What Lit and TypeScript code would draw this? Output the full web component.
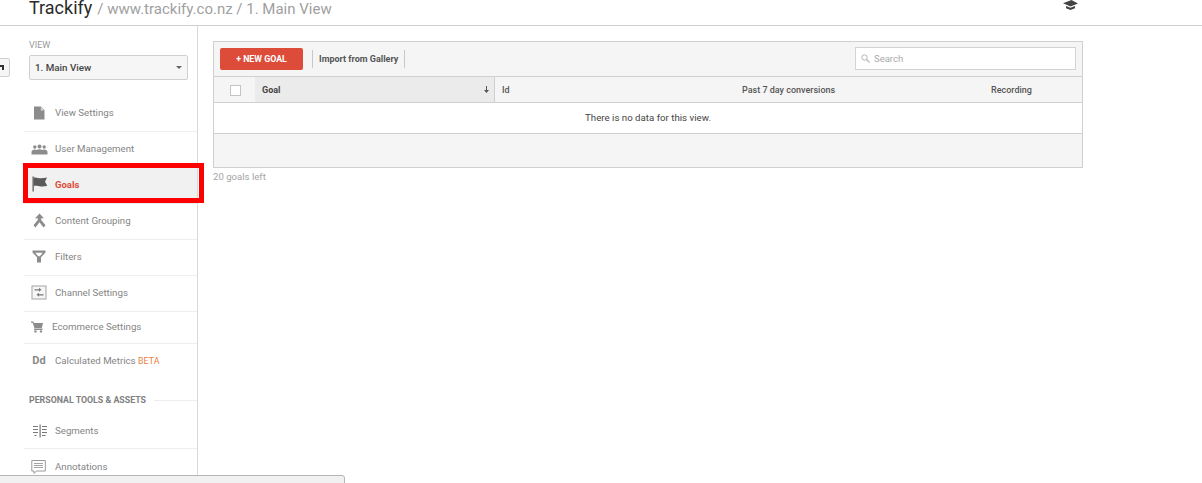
import { LitElement, html, css, svg } from "lit";
import { customElement } from "lit/decorators.js";

const icons: Record<string, unknown> = {
  doc: svg`<path d="M3 2.500h7l3.500 3.700V15.500H3z" fill="#8c8c8c"/><path d="M9.800 2.800v3.600h3.400z" fill="#d8d8d8"/>`,
  users: svg`<circle cx="3.800" cy="7" r="1.700" fill="#8c8c8c"/><circle cx="8.500" cy="6.400" r="2" fill="#8c8c8c"/><circle cx="13.200" cy="7" r="1.700" fill="#8c8c8c"/><path d="M.5 14.500v-2.500c0-1.400 1.500-2.500 3.300-2.500 .8 0 1.500 .2 1.900 .5 1.300-.9 4.300-.9 5.600 0 .4-.3 1.100-.5 1.900-.5 1.800 0 3.300 1.100 3.300 2.500v2.500z" fill="#8c8c8c"/>`,
  flag: svg`<path d="M1.500 .5h1.300v15H1.500z" fill="#5a5a5a"/><path d="M2.800 1.500c3-.5 4.500 .8 7 .8 2 0 4-.3 6.200-.8L14 5.800l2.300 4c-2.500 .7-4.500 1-6.500 .7-2.500-.3-4-.9-7-.5z" fill="#5a5a5a"/>`,
  merge: svg`<path d="M8.500 1.500l4.500 4.700h-2.800v1.800l4.300 5.200-2 2.300-4-5.200-4 5.200-2-2.300L6.800 8V6.200H4z" fill="#8c8c8c"/>`,
  filter: svg`<path d="M1.500 2.500h13V4.500L10 9.300v5.200H6V9.300L1.500 4.500z" fill="#8c8c8c"/><path d="M4.200 4.800h7.600L8.800 8.300h-1.600z" fill="#fff"/>`,
  channel: svg`<rect x="1" y="2" width="14" height="13" fill="#f6f6f6" stroke="#a3a3a3"/><path d="M3.500 5.200h4.500V3.800l2.500 2-2.500 2V6.400H3.500zM12.500 10.200H8v-1.400l-2.500 2 2.500 2v-1.400h4.500z" fill="#777"/>`,
  cart: svg`<path d="M2 3.500h2.400l.6 1.500h9l-1.200 5H5.500L3.600 4.800H2z" fill="#8c8c8c"/><path d="M5 10.500h8.500V12H5z" fill="#8c8c8c"/><circle cx="6.500" cy="13.400" r="1.200" fill="#8c8c8c"/><circle cx="12" cy="13.400" r="1.200" fill="#8c8c8c"/>`,
  seg: svg`<path d="M8.500 3.500h1.200v13H8.500zM2 5h5v1H2zM2 8h5v1H2zM2 11h5v1H2zM3.500 14h2v1h-2zM11 5h5v1h-5zM11 8h4.500v1H11zM11 11h5v1h-5zM11 14h3.500v1H11z" fill="#777"/>`,
  note: svg`<path d="M.8 3.500h13.500v10.500H5.500L3 16.500v-2.500H.8z" fill="#fff" stroke="#9a9a9a"/><path d="M3 6h9v1H3zM3 8h9v1H3zM3 10h9v1H3z" fill="#a5a5a5"/>`,
};

const navTop = [
  { icon: "doc", label: "View Settings" },
  { icon: "users", label: "User Management" },
  { icon: "flag", label: "Goals", active: true },
  { icon: "merge", label: "Content Grouping" },
  { icon: "filter", label: "Filters" },
  { icon: "channel", label: "Channel Settings" },
];

@customElement("app-root")
export class AppRoot extends LitElement {
  static styles = css`
    :host { display: block; position: relative; width: 1202px; height: 483px; overflow: hidden; background: #fff;
      font-family: Roboto, "Liberation Sans", sans-serif; font-size: 9px; color: #777; }
    .top { height: 25px; border-bottom: 1px solid #d0d0d0; display: flex; align-items: flex-start; padding-left: 29px; }
    .brand { font-size: 18px; line-height: 14px; color: #2a2a2a; margin: 1px 5px 0 0; }
    .crumb { font-size: 15px; line-height: 14px; color: #a0a0a0; margin-top: 2px; }
    .cap { margin-left: auto; margin-right: 124px; }
    .main { display: flex; height: 457px; }
    .side { width: 173px; margin-left: 24px; border-right: 1px solid #d9d9d9; flex: none; padding-top: 15px; }
    .viewlabel { font-size: 9px; line-height: 9px; color: #999; padding-left: 5px; }
    .selrow { height: 25px; margin: 5px 0 0 5px; width: 159px; box-sizing: border-box; border: 1px solid #d0d0d0; border-radius: 2px;
      background: #f6f6f6; display: flex; align-items: center; padding: 0 5px; font-weight: 500; font-size: 9.8px; color: #444; }
    .caret { margin-left: auto; width: 0; height: 0; border: 3px solid transparent; border-top-color: #666; border-bottom: 0; }
    .nav { margin-top: 16px; }
    .row { height: 36px; box-sizing: border-box; padding-bottom: 2px; border-bottom: 1px solid #eee; display: flex; align-items: center; }
    .row.short { height: 32px; }
    .row.last { border-bottom: 0; }
    .row.calc { padding-bottom: 0; }
    .row.seg { padding-bottom: 1px; }
    .row.active { background: #f1f1f1; }
    .ico { width: 31px; flex: none; display: flex; justify-content: center; }
    .row.cart-row .ico { width: 28px; }
    .lbl { font-size: 9.7px; color: #858585; }
    .active .lbl { color: #dd4b39; font-weight: 700; font-size: 9.5px; }
    .beta { color: #e8823f; font-size: 8.9px; }
    .dd { font-weight: 700; font-size: 11px; color: #8a8a8a; margin-right: 1px; }
    .sect { display: flex; align-items: center; gap: 8px; margin: 18px 0 7px 5px; font-size: 8.8px; font-weight: 700; color: #808080; height: 12px; white-space: nowrap; }
    .sect i { flex: 1; border-top: 1px solid #eee; }
    .content { padding: 15px 0 0 15px; }
    .panel { width: 870px; box-sizing: border-box; border: 1px solid #d0d0d0; background: #f5f5f5; }
    .bar { height: 34px; display: flex; align-items: center; padding: 0 6px; border-bottom: 1px solid #d0d0d0; }
    .btn { width: 83px; height: 22px; border-radius: 2px; background: #dd4b39; color: #fff; font-weight: 700; font-size: 8.8px; display: flex; align-items: center; justify-content: center; }
    .imp { margin-left: 9px; border-left: 1px solid #c8c8c8; border-right: 1px solid #c8c8c8; height: 18px; padding: 0 6px; display: flex; align-items: center; font-weight: 700; font-size: 9px; color: #555; }
    .search { margin-left: auto; margin-top: -1px; width: 221px; height: 23px; box-sizing: border-box; border: 1px solid #d3d3d3; background: #fff; display: flex; align-items: center; padding-left: 5px; gap: 4px; color: #aaa; font-size: 9.5px; }
    .head { height: 25px; display: flex; align-items: center; border-bottom: 1px solid #d0d0d0; font-weight: 500; font-size: 9px; color: #555; }
    .chk { width: 41px; display: flex; justify-content: center; align-items: center; height: 100%; flex: none; }
    .chk i { width: 9px; height: 9px; border: 1px solid #c4c4c4; background: #fff; display: block; margin: 2px 0 0 2px; }
    .goal { width: 240px; height: 100%; background: #ebebeb; display: flex; align-items: center; justify-content: space-between; padding: 0 5px 0 7px; box-sizing: border-box; border-right: 1px solid #d0d0d0; flex: none; color: #444; font-weight: 700; font-size: 9px; }
    .id { width: 247px; padding-left: 7px; box-sizing: border-box; flex: none; }
    .past { width: 249px; flex: none; }
    .empty { height: 31px; box-sizing: border-box; padding-bottom: 2px; background: #fff; border-bottom: 1px solid #d0d0d0; display: flex; align-items: center; justify-content: center; color: #444; font-size: 9.7px; }
    .foot { height: 33px; }
    .left { margin-top: 3px; font-size: 9.6px; color: #a5a5a5; }
    .red { position: absolute; left: 23px; top: 163px; width: 181px; height: 40px; box-sizing: border-box; border: 5px solid #f00; }
    .stub { position: absolute; left: -8px; top: 58px; width: 18px; height: 19px; box-sizing: border-box; border: 1px solid #d0d0d0; border-radius: 2px; background: #f6f6f6; display: flex; align-items: center; justify-content: center; }
    .tray { position: absolute; left: -4px; top: 475px; width: 349px; height: 14px; box-sizing: border-box; border: 1px solid #b5b5b5; border-radius: 3px; background: #f1f1f1; }
  `;

  private ic(name: string) {
    return html`<svg width="18" height="18" viewBox="0 0 18 18">${icons[name]}</svg>`;
  }

  render() {
    return html`
      <div class="top">
        <span class="brand">Trackify</span>
        <span class="crumb">/ www.trackify.co.nz / 1. Main View</span>
        <svg class="cap" width="15" height="10" viewBox="0 0 15 10"><path d="M0 3.200L8.500 0 15 3.500 7.500 6.500z" fill="#444"/><path d="M3 6l4.500 1.800L12 6v2.300L7.500 10 3 8.300z" fill="#444"/></svg>
      </div>
      <div class="main">
        <div class="side">
          <div class="viewlabel">VIEW</div>
          <div class="selrow">1. Main View<span class="caret"></span></div>
          <div class="nav">
            ${navTop.map(
              (n) => html`<div class="row ${n.active ? "active" : ""}"><span class="ico">${this.ic(n.icon)}</span><span class="lbl">${n.label}</span></div>`
            )}
            <div class="row short cart-row"><span class="ico">${this.ic("cart")}</span><span class="lbl">Ecommerce Settings</span></div>
            <div class="row short last calc"><span class="ico"><span class="dd">Dd</span></span><span class="lbl">Calculated Metrics <span class="beta">BETA</span></span></div>
          </div>
          <div class="sect">PERSONAL TOOLS &amp; ASSETS<i></i></div>
          <div class="row seg"><span class="ico">${this.ic("seg")}</span><span class="lbl">Segments</span></div>
          <div class="row last"><span class="ico">${this.ic("note")}</span><span class="lbl">Annotations</span></div>
        </div>
        <div class="content">
          <div class="panel">
            <div class="bar">
              <div class="btn">+ NEW GOAL</div>
              <div class="imp">Import from Gallery</div>
              <div class="search">
                <svg width="9" height="9" viewBox="0 0 9 9"><circle cx="3.500" cy="3.500" r="2.700" fill="none" stroke="#b5b5b5"/><path d="M5.500 5.500L8.500 8.500" stroke="#b5b5b5" stroke-width="1.300"/></svg>
                Search
              </div>
            </div>
            <div class="head">
              <div class="chk"><i></i></div>
              <div class="goal">Goal
                <svg width="5" height="7" viewBox="0 0 5 7"><path d="M2 0h1v4h2L2.500 7 0 4h2z" fill="#555"/></svg>
              </div>
              <div class="id">Id</div>
              <div class="past">Past 7 day conversions</div>
              <div>Recording</div>
            </div>
            <div class="empty">There is no data for this view.</div>
            <div class="foot"></div>
          </div>
          <div class="left">20 goals left</div>
        </div>
      </div>
      <div class="stub"><svg width="6" height="5" viewBox="0 0 6 5"><path d="M0 0h6v5H4V2H0z" fill="#333"/></svg></div>
      <div class="red"></div>
      <div class="tray"></div>
    `;
  }
}
